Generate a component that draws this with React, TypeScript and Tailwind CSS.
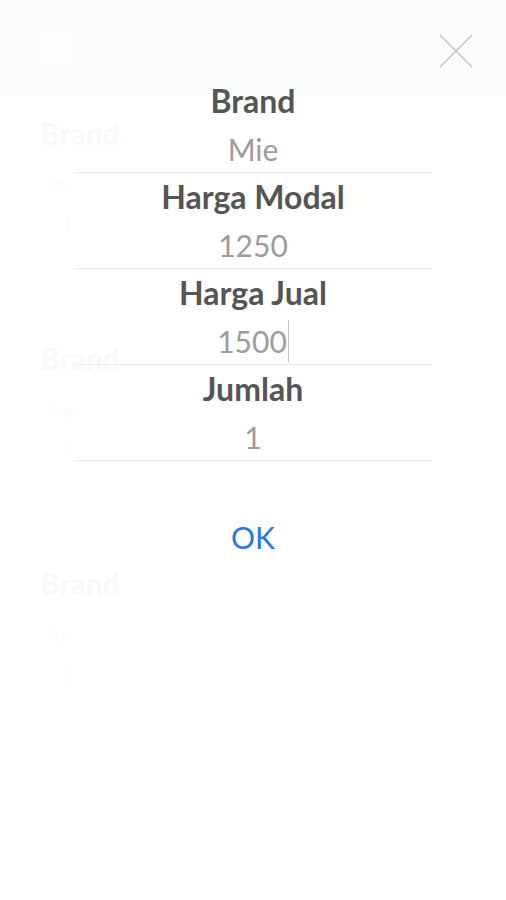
import React from "react";

type Field = { label: string; value: string; focused?: boolean };

const fields: Field[] = [
  { label: "Brand", value: "Mie" },
  { label: "Harga Modal", value: "1250" },
  { label: "Harga Jual", value: "1500", focused: true },
  { label: "Jumlah", value: "1" },
];

const ghostCards = [
  { brand: "Brand", name: "Mie", qty: "1" },
  { brand: "Brand", name: "Kopi", qty: "2" },
  { brand: "Brand", name: "Teh", qty: "3" },
];

const App = () => {
  return (
    <div className="relative h-[900px] w-full overflow-hidden bg-white font-['Lato',sans-serif]">
      {/* page behind the dialog */}
      <div className="flex h-[95px] items-center gap-4 bg-[#3f8f58] px-10">
        <div className="h-8 w-8 rounded bg-white/70" />
      </div>
      <div className="flex w-[150px] flex-col gap-[100px] pl-10 pt-[16px]">
        {ghostCards.map((c, i) => (
          <div key={i} className="flex flex-col gap-5">
            <p className="text-[30px] font-bold text-[#222]">{c.brand}</p>
            <p className="pl-2 text-sm text-[#333]">{c.name}</p>
            <p className="pl-6 text-sm text-[#333]">{c.qty}</p>
          </div>
        ))}
      </div>

      {/* dialog overlay */}
      <div className="absolute inset-0 flex flex-col items-center bg-white/[0.975]">
        <button className="absolute right-[33px] top-[34px] h-[34px] w-[34px]">
          <svg viewBox="0 0 34 34" className="h-full w-full">
            <path d="M1 1 L33 33 M33 1 L1 33" stroke="#c6c6c6" strokeWidth="1.6" fill="none" />
          </svg>
        </button>

        <div className="mt-[77px] flex w-[356px] flex-col">
          {fields.map((f) => (
            <div key={f.label} className="flex flex-col">
              <p className="h-12 text-center text-[32px] font-bold leading-[48px] text-[#555]">{f.label}</p>
              <div className="flex h-12 items-center justify-center border-b border-[#ebebeb] text-[30px] leading-[48px] text-[#9c9c9c]">
                <span>{f.value}</span>
                {f.focused && <span className="ml-px h-[42px] w-px bg-[#c0c0c0]" />}
              </div>
            </div>
          ))}
        </div>

        <button className="mt-[52px] h-12 px-4 text-[30px] leading-[48px] text-[#2a76e6]">OK</button>
      </div>
    </div>
  );
};

export default App;
